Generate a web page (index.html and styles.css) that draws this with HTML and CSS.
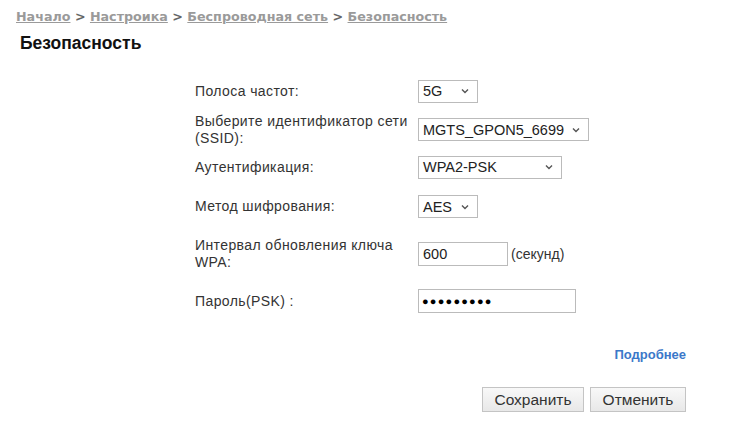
FILE: index.html
```
<!DOCTYPE html>
<html lang="ru">
<head>
  <meta charset="UTF-8">
  <title>Безопасность</title>
  <link rel="stylesheet" href="styles.css">
</head>
<body>
  <div class="crumbs">
    <a href="#">Начало</a> &gt; <a href="#">Настроика</a> &gt; <a href="#">Беспроводная сеть</a> &gt; <a href="#">Безопасность</a>
  </div>
  <h1>Безопасность</h1>

  <div class="form">
    <div class="lbl">Полоса частот:</div>
    <div><span class="sel w60">5G<svg viewBox="0 0 8 6"><path d="M1 1.5l3 3 3-3"/></svg></span></div>

    <div class="lbl">Выберите идентификатор сети<br>(SSID):</div>
    <div><span class="sel w171">MGTS_GPON5_6699<svg viewBox="0 0 8 6"><path d="M1 1.5l3 3 3-3"/></svg></span></div>

    <div class="lbl">Аутентификация:</div>
    <div><span class="sel w144">WPA2-PSK<svg viewBox="0 0 8 6"><path d="M1 1.5l3 3 3-3"/></svg></span></div>

    <div class="lbl">Метод шифрования:</div>
    <div><span class="sel w60">AES<svg viewBox="0 0 8 6"><path d="M1 1.5l3 3 3-3"/></svg></span></div>

    <div class="lbl">Интервал обновления ключа<br>WPA:</div>
    <div class="inl"><span class="txt w90">600</span><span class="unit">(секунд)</span></div>

    <div class="lbl">Пароль(PSK) :</div>
    <div><span class="txt w158 pass">●●●●●●●●●</span></div>
  </div>

  <div class="more"><a href="#">Подробнее</a></div>

  <div class="actions">
    <button type="button" class="b1">Сохранить</button>
    <button type="button" class="b2">Отменить</button>
  </div>
</body>
</html>
```
FILE: styles.css
```
body {
  margin: 0;
  background: #fff;
  font-family: "Liberation Sans", Arial, sans-serif;
  color: #333;
}

.crumbs {
  padding: 9px 0 0 16px;
  font-family: "DejaVu Sans", Verdana, sans-serif;
  font-size: 12.7px;
  line-height: 16px;
  font-weight: bold;
  color: #666;
}
.crumbs a {
  color: #9a9a9a;
  text-decoration: underline;
}

h1 {
  margin: 8px 0 0 20px;
  font-size: 17.5px;
  line-height: 20px;
  color: #111;
}

.form {
  display: grid;
  grid-template-columns: 223px auto;
  grid-template-rows: 38px 39px 36px 43px 52px 42px;
  align-items: center;
  margin: 19px 0 0 195px;
  font-size: 14px;
}
.lbl { line-height: 17px; letter-spacing: 0.4px; }

.sel, .txt {
  display: inline-flex;
  align-items: center;
  box-sizing: border-box;
  border: 1px solid #bbb;
  background: #fff;
  font-size: 14.5px;
  color: #222;
  padding: 0 4px;
}
.sel { height: 23px; justify-content: space-between; }
.sel svg {
  width: 8px;
  height: 6px;
  margin-right: 4px;
  fill: none;
  stroke: #555;
  stroke-width: 1.4;
}
.txt { height: 24px; }
.w60 { width: 60px; }
.w90 { width: 90px; }
.w144 { width: 144px; }
.w158 { width: 158px; }
.w171 { width: 171px; }

.inl { display: flex; align-items: center; }
.unit { margin-left: 3px; font-size: 14px; }
.pass { font-size: 11px; letter-spacing: 1.2px; color: #000; padding-left: 3px; }

.more {
  margin: 25px 64px 0 0;
  text-align: right;
  font-size: 13px;
  line-height: 16px;
  font-weight: bold;
}
.more a { color: #3b78c9; text-decoration: none; }

.actions {
  margin: 24px 64px 0 0;
  display: flex;
  justify-content: flex-end;
  gap: 6px;
}
.actions button {
  height: 25px;
  border: 1px solid #c4c4c4;
  background: linear-gradient(#f8f8f8, #e8e8e8);
  font-family: inherit;
  font-size: 15.5px;
  color: #333;
  padding: 0;
}
.b1 { width: 102px; }
.b2 { width: 96px; }
```
